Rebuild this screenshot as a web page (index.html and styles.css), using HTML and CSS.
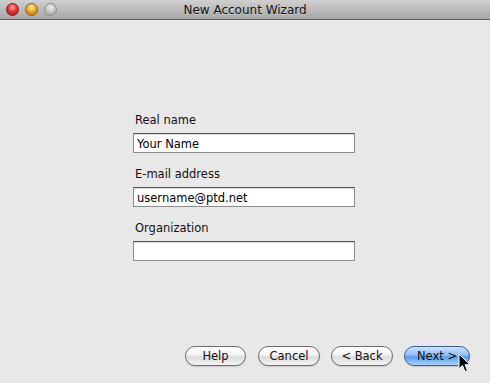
FILE: index.html
```html
<!DOCTYPE html>
<html>
<head>
  <title>New Account Wizard</title>
  <link rel="stylesheet" href="styles.css">
</head>
<body>
  <div class="window">
    <div class="titlebar">
      <div class="lights">
        <span class="light light--close"></span>
        <span class="light light--min"></span>
        <span class="light light--zoom"></span>
      </div>
      <div class="titlebar_title">New Account Wizard</div>
    </div>

    <div class="content">
      <form class="fields">
        <label class="field">
          <span class="field_label">Real name</span>
          <input class="field_input" type="text" value="Your Name">
        </label>
        <label class="field">
          <span class="field_label">E-mail address</span>
          <input class="field_input" type="text" value="username@ptd.net">
        </label>
        <label class="field">
          <span class="field_label">Organization</span>
          <input class="field_input" type="text" value="">
        </label>
      </form>

      <div class="buttons">
        <button class="btn btn--help" type="button">Help</button>
        <button class="btn" type="button">Cancel</button>
        <button class="btn" type="button">&lt; Back</button>
        <button class="btn btn--default" type="button">Next &gt;
          <svg class="cursor" width="13" height="20" viewBox="0 0 13 20">
            <path d="M1 1 L1 16 L4.5 12.5 L7 18.5 L9.5 17.5 L7 11.8 L12 11.8 Z" fill="#000" stroke="#fff" stroke-width="1"/>
          </svg>
        </button>
      </div>
    </div>
  </div>
</body>
</html>
```

FILE: styles.css
```css
/* окно мастера */
html, body {
    margin: 0;
    padding: 0;
}

body {
    font-family: "DejaVu Sans", "Liberation Sans", sans-serif;
    background: #e8e8e8;
}

.window {
    width: 490px;
    height: 383px;
    display: flex;
    flex-direction: column;
    background: #e8e8e8;
}

/* заголовок */
.titlebar {
    height: 19px;
    border-bottom: 1px solid #5a5a5a;
    background: linear-gradient(#d0d0d0, #a6a6a6);
    display: flex;
    align-items: center;
}

.lights {
    display: flex;
    gap: 6px;
    padding-left: 6px;
}

.light {
    width: 13px;
    height: 13px;
    border-radius: 50%;
    box-sizing: border-box;
}

.light--close {
    background: radial-gradient(circle at 50% 30%, #ffb0a8 0, #e8303a 45%, #a8101c 100%);
    border: 1px solid #8a1a1a;
}

.light--min {
    background: radial-gradient(circle at 50% 30%, #fff0a0 0, #f0a020 50%, #b86a00 100%);
    border: 1px solid #8a6010;
}

.light--zoom {
    background: radial-gradient(circle at 50% 30%, #f0f0f0 0, #c4c4c4 50%, #9a9a9a 100%);
    border: 1px solid #8a8a8a;
}

.titlebar_title {
    flex: 1;
    text-align: center;
    font-size: 12px;
    color: #111;
    padding-right: 57px;
    text-shadow: 0 1px 0 rgba(255, 255, 255, 0.35);
}

/* форма */
.content {
    flex: 1;
    display: flex;
    flex-direction: column;
}

.fields {
    margin: 0;
    padding: 93px 0 0 133px;
    display: flex;
    flex-direction: column;
    gap: 14px;
}

.field {
    display: flex;
    flex-direction: column;
    gap: 5px;
}

.field_label {
    font-size: 11.5px;
    color: #111;
    padding-left: 2px;
    line-height: 15px;
}

.field_input {
    width: 222px;
    height: 20px;
    box-sizing: border-box;
    margin: 0;
    padding: 1px 3px 0;
    border: 1px solid #8c8c8c;
    border-top-color: #555;
    background: #fff;
    box-shadow: inset 0 1px 1px rgba(0, 0, 0, 0.15);
    font-family: "DejaVu Sans", "Liberation Sans", sans-serif;
    font-size: 11.5px;
    color: #000;
    outline: none;
}

/* кнопки */
.buttons {
    margin-top: auto;
    padding: 0 20px 17px 0;
    display: flex;
    justify-content: flex-end;
    gap: 11px;
}

.btn {
    position: relative;
    height: 20px;
    width: 62px;
    padding: 0;
    border-radius: 10px;
    border: 1px solid #6c6c6c;
    background: linear-gradient(#ffffff, #f2f2f2 45%, #dcdcdc 55%, #f4f4f4);
    font-family: "DejaVu Sans", "Liberation Sans", sans-serif;
    font-size: 11.5px;
    color: #111;
    box-shadow: 0 1px 1px rgba(0, 0, 0, 0.15);
}

.btn--help {
    width: 61px;
    margin-right: 1px;
}

.btn--default {
    width: 66px;
    border-color: #3a5f9c;
    background: linear-gradient(#cfe3ff, #8dbdf8 45%, #5a9bec 55%, #a8d4ff);
}

.cursor {
    position: absolute;
    left: 53px;
    top: 6px;
}
```
